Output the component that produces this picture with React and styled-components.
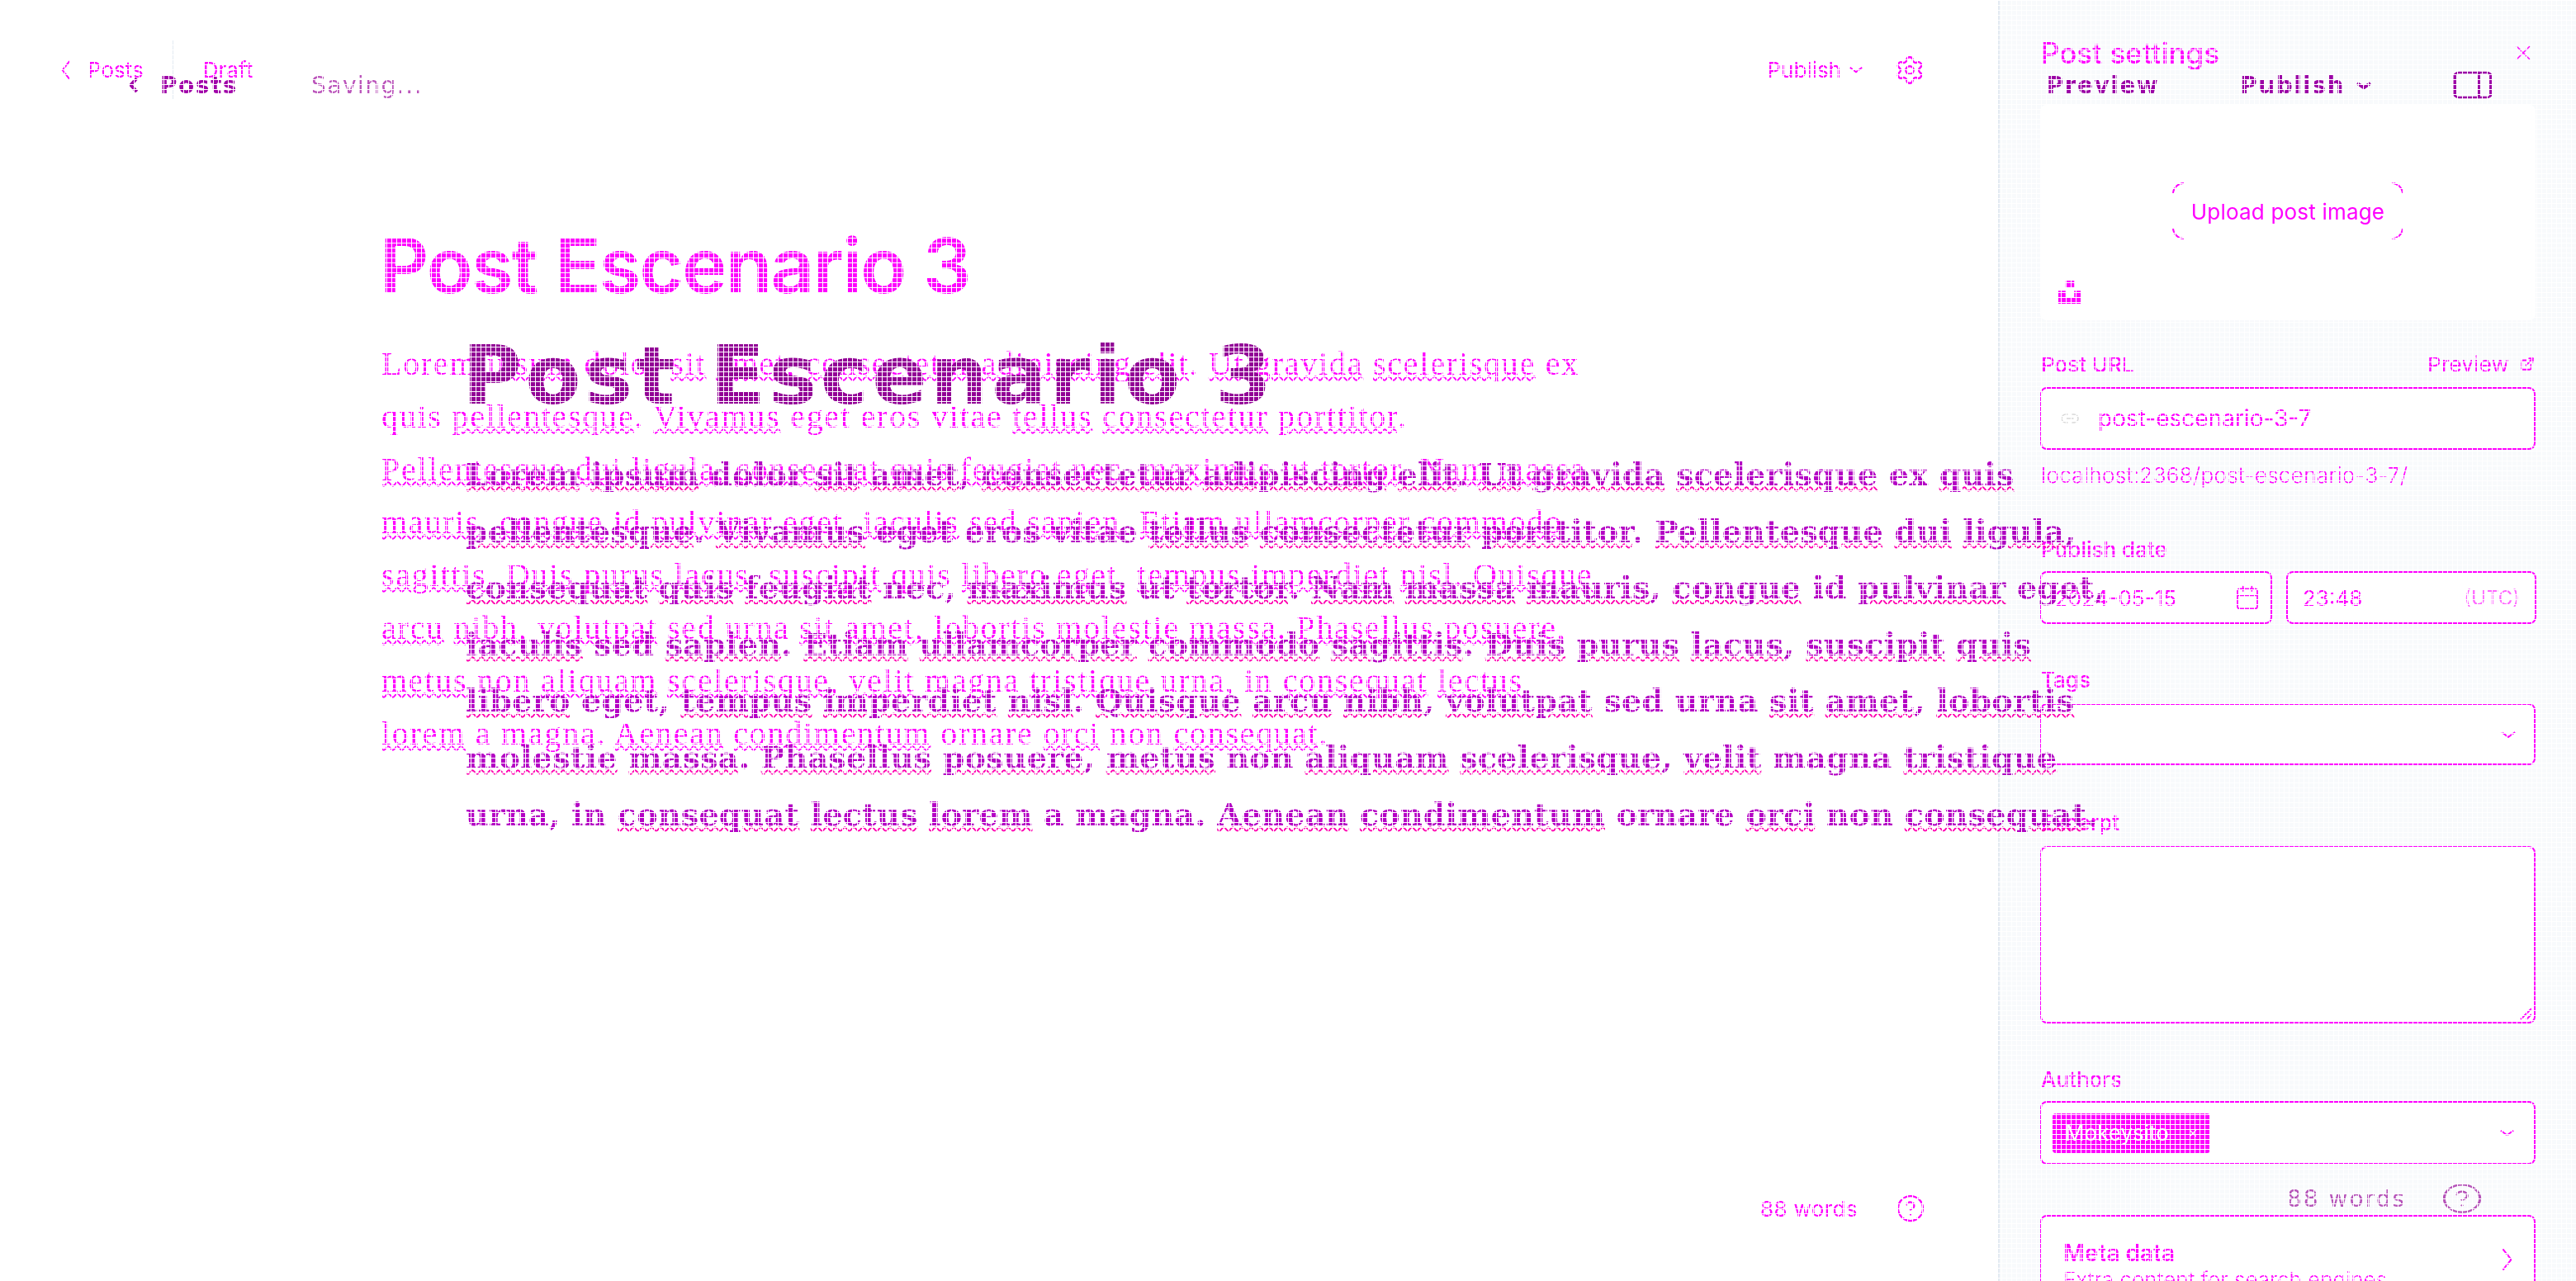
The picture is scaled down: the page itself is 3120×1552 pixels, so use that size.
import React from 'react'
import styled, { createGlobalStyle } from 'styled-components'
import { Settings, CircleHelp, Calendar, ExternalLink, Link2, PanelRight, X } from 'lucide-react'

const GlobalStyle = createGlobalStyle`
  html, body { margin: 0; padding: 0; background: #fff; }
  * { box-sizing: border-box; }
`

const MAGENTA = '#ff00ff'
const PURPLE = '#a000a8'

const PARAGRAPH = 'Lorem ipsum dolor sit amet, consectetur adipiscing elit. Ut gravida scelerisque ex quis pellentesque. Vivamus eget eros vitae tellus consectetur porttitor. Pellentesque dui ligula, consequat quis feugiat nec, maximus ut tortor. Nam massa mauris, congue id pulvinar eget, iaculis sed sapien. Etiam ullamcorper commodo sagittis. Duis purus lacus, suscipit quis libero eget, tempus imperdiet nisl. Quisque arcu nibh, volutpat sed urna sit amet, lobortis molestie massa. Phasellus posuere, metus non aliquam scelerisque, velit magna tristique urna, in consequat lectus lorem a magna. Aenean condimentum ornare orci non consequat.'

const KNOWN_WORDS = ['dolor', 'ex', 'eget', 'eros', 'vitae', 'sed', 'urna', 'in', 'a', 'magna', 'ornare', 'non', 'id', 'ut', 'nam', 'nec']

const Page = styled.div`
  position: relative;
  width: 3120px;
  height: 1552px;
  overflow: hidden;
  background: #fff;
  font-family: Inter, "Liberation Sans", sans-serif;
  color: ${MAGENTA};
`

const Editor = styled.div`
  display: grid;
  grid-template-columns: 2420px 700px;
  height: 1552px;
`

const Main = styled.main`
  display: flex;
  flex-direction: column;
  padding: 49px 88px 70px 73px;
`

const TopBar = styled.div`
  display: flex;
  align-items: center;
  height: 71px;
  font-size: 26px;
`

const BackLink = styled.span`
  display: flex;
  align-items: center;
  gap: 19px;
`

const Separator = styled.span`
  width: 2px;
  height: 71px;
  margin: 0 35px;
  background: #e3eaf2;
`

const PublishMenu = styled.span`
  display: flex;
  align-items: center;
  gap: 10px;
  margin-left: auto;
`

const GearSlot = styled.span`
  display: flex;
  margin-left: 38px;
`

const Title = styled.h1`
  margin: 147px 0 0 387px;
  font-size: 92px;
  line-height: 110px;
  font-weight: 600;
  letter-spacing: -1.8px;
`

const Body = styled.p`
  width: 1472px;
  margin: 32px 0 0 389px;
  font-family: "Liberation Serif", serif;
  font-size: 40px;
  line-height: 64px;
  letter-spacing: 1.75px;
`

const Misspelt = styled.span`
  text-decoration: underline wavy ${p => p.$color};
  text-decoration-thickness: 2px;
`

const WordCount = styled.div`
  display: flex;
  align-items: center;
  justify-content: flex-end;
  gap: 46px;
  margin-top: auto;
  font-size: 26px;
  letter-spacing: .4px;
`

const Sidebar = styled.aside`
  display: flex;
  flex-direction: column;
  height: 1552px;
  padding: 0 49px 0 49px;
  border-left: 2px solid #e3eaf2;
  background: #f8fafc;
  & > * {
    flex: none;
  }
`

const SidebarHead = styled.div`
  display: flex;
  align-items: center;
  justify-content: space-between;
  height: 127px;
  padding: 0 0 0 1px;
  font-size: 35px;
  font-weight: 500;
`

const CloseSlot = styled.span`
  display: flex;
`

const ImagePanel = styled.div`
  position: relative;
  display: flex;
  align-items: center;
  justify-content: center;
  height: 261px;
  padding-bottom: 4px;
  border-radius: 8px;
  background: #fff;
`

const UploadButton = styled.span`
  position: relative;
  display: flex;
  align-items: center;
  justify-content: center;
  width: 280px;
  height: 69px;
  border: 2px solid ${MAGENTA};
  border-radius: 14px;
  background: #fff;
  font-size: 26px;
  letter-spacing: .2px;
  &::before {
    content: '';
    position: absolute;
    top: -2px;
    bottom: -2px;
    left: 12px;
    right: 12px;
    background: #fff;
  }
  &::after {
    content: '';
    position: absolute;
    left: -2px;
    right: -2px;
    top: 12px;
    bottom: 12px;
    background: #fff;
  }
`

const UploadLabel = styled.span`
  position: relative;
  z-index: 1;
  top: 1px;
`

const UnsplashMark = styled.svg`
  position: absolute;
  left: 22px;
  bottom: 20px;
  width: 28px;
  height: 28px;
  fill: ${MAGENTA};
`

const Field = styled.div`
  display: flex;
  flex-direction: column;
  margin-top: ${p => p.$top}px;
`

const LabelRow = styled.div`
  display: flex;
  align-items: center;
  justify-content: space-between;
  height: 30px;
  padding: 0 1px 0 1px;
  font-size: 26px;
  font-weight: 500;
`

const PreviewLink = styled.span`
  display: flex;
  align-items: center;
  gap: 13px;
  font-weight: 400;
  letter-spacing: .2px;
`

const InputBox = styled.div`
  display: flex;
  align-items: center;
  justify-content: space-between;
  height: ${p => p.$height}px;
  margin-top: ${p => p.$gap}px;
  padding: 0 ${p => p.$padRight || 18}px 0 ${p => p.$padLeft || 18}px;
  border: 2px solid ${MAGENTA};
  border-radius: 8px;
  background: #fff;
  font-size: 26px;
`

const SlugIcon = styled.span`
  display: flex;
  margin-right: 22px;
  color: #d8d8d8;
`

const SlugText = styled.span`
  flex: 1;
  font-size: 28px;
`

const Helper = styled.div`
  margin: 16px 0 0 1px;
  font-size: 26px;
  line-height: 30px;
  font-weight: 300;
  letter-spacing: .35px;
`

const DateRow = styled.div`
  display: grid;
  grid-template-columns: 281px 303px;
  gap: 17px;
`

const Muted = styled.span`
  font-size: 24px;
  color: #ff66ff;
`

const Grip = styled.svg`
  position: absolute;
  right: 2px;
  bottom: 2px;
  width: 16px;
  height: 16px;
  stroke: ${MAGENTA};
  stroke-width: 2;
`

const TextArea = styled(InputBox)`
  position: relative;
`

const Chip = styled.span`
  display: flex;
  align-items: center;
  justify-content: space-between;
  width: 191px;
  height: 48px;
  padding: 0 14px 0 15px;
  border-radius: 4px;
  background: ${MAGENTA};
  color: #fff;
  font-size: 26px;
`

const MetaBox = styled.div`
  display: flex;
  align-items: flex-start;
  justify-content: space-between;
  height: 140px;
  margin-top: 61px;
  padding: 26px 24px 0 26px;
  border: 2px solid ${MAGENTA};
  border-radius: 8px 8px 0 0;
  background: #fff;
`

const MetaTitle = styled.div`
  font-size: 28px;
  font-weight: 600;
  line-height: 36px;
`

const MetaHint = styled.div`
  font-size: 26px;
  line-height: 30px;
  font-weight: 300;
`

const MetaArrow = styled.span`
  display: flex;
  margin-top: 12px;
`

/* second pass of the same page, lying over the first one */
const Overprint = styled.div`
  position: absolute;
  inset: 0;
  display: flex;
  flex-direction: column;
  padding: 0 112px 0 156px;
  color: ${PURPLE};
  font-family: "DejaVu Sans", sans-serif;
  mix-blend-mode: multiply;
  pointer-events: none;
`

const WideBar = styled.div`
  display: flex;
  align-items: center;
  height: 40px;
  margin-top: 83px;
  font-size: 28px;
  font-weight: 700;
  letter-spacing: 1.5px;
`

const WideBack = styled.span`
  display: flex;
  align-items: center;
  gap: 26px;
`

const Saving = styled.span`
  margin-left: 89px;
  font-weight: 400;
  color: #bb55bb;
`

const WideActions = styled.span`
  display: flex;
  align-items: center;
  margin-left: auto;
  margin-right: -16px;
`

const WidePublish = styled.span`
  display: flex;
  align-items: center;
  gap: 14px;
  margin: 0 94px 0 98px;
`

const WideTitle = styled.h2`
  margin: 274px 0 0 404px;
  font-size: 98px;
  line-height: 116px;
  font-weight: 700;
  letter-spacing: 4.3px;
  white-space: nowrap;
  color: #920096;
`

const WideBody = styled.p`
  width: 2010px;
  margin: 28px 0 0 408px;
  font-family: "DejaVu Serif", serif;
  font-size: 38px;
  line-height: 68.6px;
  font-weight: 700;
  letter-spacing: .25px;
  color: #b400c4;
`

const WideCount = styled.div`
  display: flex;
  align-items: center;
  justify-content: flex-end;
  gap: 42px;
  margin-top: auto;
  margin-bottom: 80px;
  font-size: 28px;
  letter-spacing: 2px;
  color: #bb55bb;
`

const Mesh = styled.div`
  position: absolute;
  inset: 0;
  background-image:
    linear-gradient(to right, #fff 1px, transparent 1px),
    linear-gradient(to bottom, #fff 1px, transparent 1px);
  background-size: 6px 6px;
  pointer-events: none;
`

function Chevron({ dir, width, height, stroke = 2 }) {
  const points = {
    left: '80,5 20,50 80,95',
    right: '20,5 80,50 20,95',
    down: '5,20 50,80 95,20',
  }[dir]
  return (
    <svg width={width} height={height} viewBox="0 0 100 100" preserveAspectRatio="none" style={{ flex: 'none' }}>
      <polyline points={points} fill="none" stroke="currentColor" strokeWidth={stroke} vectorEffect="non-scaling-stroke" />
    </svg>
  )
}

function Spellchecked({ color, known = KNOWN_WORDS }) {
  return PARAGRAPH.split(' ').map((word, i) => {
    const bare = word.replace(/[.,]/g, '')
    const key = bare + i
    if (known.includes(bare)) return <React.Fragment key={key}>{word} </React.Fragment>
    return <React.Fragment key={key}><Misspelt $color={color}>{bare}</Misspelt>{word.slice(bare.length)} </React.Fragment>
  })
}

export default function App() {
  return (
    <Page>
      <GlobalStyle />
      <Editor>
        <Main>
          <TopBar>
            <BackLink><Chevron dir="left" width={14} height={24} />Posts</BackLink>
            <Separator />
            <span>Draft</span>
            <PublishMenu>Publish<Chevron dir="down" width={16} height={9} /></PublishMenu>
            <GearSlot><Settings size={38} strokeWidth={1.5} /></GearSlot>
          </TopBar>
          <Title>Post Escenario 3</Title>
          <Body><Spellchecked color={MAGENTA} known={[...KNOWN_WORDS, 'Lorem', 'quis']} /></Body>
          <WordCount>88 words<CircleHelp size={36} strokeWidth={1.5} /></WordCount>
        </Main>
        <Sidebar>
          <SidebarHead>
            <span>Post settings</span>
            <CloseSlot><X size={30} strokeWidth={1.2} /></CloseSlot>
          </SidebarHead>
          <ImagePanel>
            <UploadButton><UploadLabel>Upload post image</UploadLabel></UploadButton>
            <UnsplashMark viewBox="0 0 32 32"><path d="M10 9V0h12v9H10zm12 5h10v18H0V14h10v9h12v-9z" /></UnsplashMark>
          </ImagePanel>
          <Field $top={38}>
            <LabelRow>Post URL<PreviewLink>Preview<ExternalLink size={18} strokeWidth={2.4} /></PreviewLink></LabelRow>
            <InputBox $height={76} $gap={13} $padLeft={22}>
              <SlugIcon><Link2 size={24} strokeWidth={1.5} /></SlugIcon>
              <SlugText>post-escenario-3-7</SlugText>
            </InputBox>
            <Helper>localhost:2368/post-escenario-3-7/</Helper>
          </Field>
          <Field $top={59}>
            <LabelRow>Publish date</LabelRow>
            <DateRow>
              <InputBox $height={64} $gap={12} $padLeft={16} $padRight={12}>2024-05-15<Calendar size={32} strokeWidth={1.3} /></InputBox>
              <InputBox $height={64} $gap={12} $padRight={18}>23:48<Muted>(UTC)</Muted></InputBox>
            </DateRow>
          </Field>
          <Field $top={52}>
            <LabelRow>Tags</LabelRow>
            <InputBox $height={75} $gap={14} $padRight={22}><span />
              <Chevron dir="down" width={18} height={10} />
            </InputBox>
          </Field>
          <Field $top={54}>
            <LabelRow>Excerpt</LabelRow>
            <TextArea $height={215} $gap={14}>
              <Grip viewBox="0 0 16 16"><path d="M2 15L15 2M9 15l6-6" /></Grip>
            </TextArea>
          </Field>
          <Field $top={52}>
            <LabelRow>Authors</LabelRow>
            <InputBox $height={77} $gap={12} $padLeft={13} $padRight={24}>
              <Chip>Mokeysito<X size={14} strokeWidth={2} /></Chip>
              <Chevron dir="down" width={17} height={9} />
            </InputBox>
          </Field>
          <MetaBox>
            <div>
              <MetaTitle>Meta data</MetaTitle>
              <MetaHint>Extra content for search engines</MetaHint>
            </div>
            <MetaArrow><Chevron dir="right" width={17} height={28} /></MetaArrow>
          </MetaBox>
        </Sidebar>
      </Editor>
      <Overprint>
        <WideBar>
          <WideBack><Chevron dir="left" width={12} height={18} stroke={4} />Posts</WideBack>
          <Saving>Saving...</Saving>
          <WideActions>
            Preview
            <WidePublish>Publish<Chevron dir="down" width={18} height={9} stroke={4} /></WidePublish>
            <PanelRight width={58} height={40} strokeWidth={1.4} preserveAspectRatio="none" />
          </WideActions>
        </WideBar>
        <WideTitle>Post Escenario 3</WideTitle>
        <WideBody><Spellchecked color="#ff00b0" /></WideBody>
        <WideCount>88 words<CircleHelp width={52} height={40} strokeWidth={1.4} preserveAspectRatio="none" /></WideCount>
      </Overprint>
      <Mesh />
    </Page>
  )
}
